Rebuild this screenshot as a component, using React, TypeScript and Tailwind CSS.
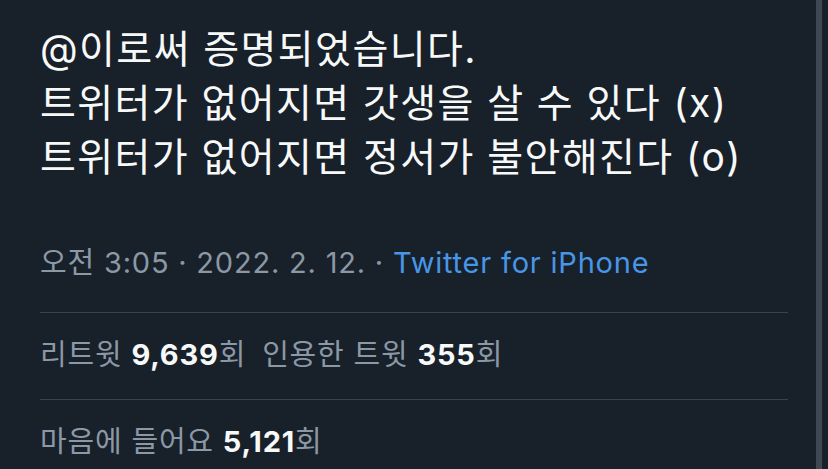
import React from 'react';

const font = { fontFamily: 'Inter, "Noto Sans CJK KR", sans-serif' };

const Stat = ({ label, value }: { label: string; value: string }) => (
  <span>
    {label} <span className="font-bold text-[#f7f9f9]">{value}</span>회
  </span>
);

export default function App() {
  return (
    <div
      className="w-[828px] h-[469px] overflow-hidden bg-[#18202a] flex"
      style={font}
    >
      <div className="w-[788px] pl-10">
        <div className="pt-[22px] text-[39px] leading-[54px] text-[#f7f9f9] tracking-[1.4px]">
          <div>@이로써 증명되었습니다.</div>
          <div>트위터가 없어지면 갓생을 살 수 있다 (x)</div>
          <div>트위터가 없어지면 정서가 불안해진다 (o)</div>
        </div>

        <div className="mt-[61px] pb-[31px] text-[29px] leading-[36px] tracking-[0.8px] text-[#8b98a5] border-b border-[#38444d]">
          오전 3:05 · 2022. 2. 12. ·{' '}
          <span className="text-[#4896e6]">Twitter for iPhone</span>
        </div>

        <div className="pt-[24px] pb-[26px] text-[29px] leading-[36px] tracking-[0.8px] text-[#8b98a5] border-b border-[#38444d] flex gap-4">
          <Stat label="리트윗" value="9,639" />
          <Stat label="인용한 트윗" value="355" />
        </div>

        <div className="pt-[24px] text-[29px] leading-[36px] tracking-[0.8px] text-[#8b98a5]">
          <Stat label="마음에 들어요" value="5,121" />
        </div>
      </div>

      <div className="ml-[28px] w-[6px] h-full bg-[#3e4852]" />
    </div>
  );
}
